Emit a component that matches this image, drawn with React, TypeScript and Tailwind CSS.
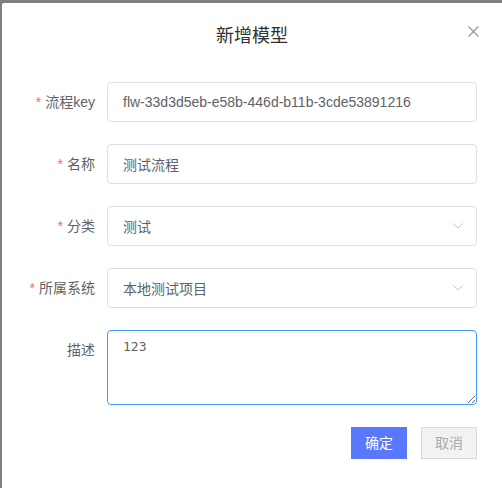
import { ReactNode } from "react";

function Label({ text, required }: { text: string; required?: boolean }) {
  return (
    <div className="w-[105px] shrink-0 pr-3 text-right text-[14px] leading-[40px] text-[#606266]">
      {required && <span className="mr-1 text-[#f56c6c]">*</span>}
      {text}
    </div>
  );
}

function Row({ children, last }: { children: ReactNode; last?: boolean }) {
  return <div className={last ? "flex" : "mb-[22px] flex"}>{children}</div>;
}

function Chevron() {
  return (
    <svg
      className="pointer-events-none absolute right-[13px] top-1/2 -translate-y-1/2"
      width="12"
      height="8"
      viewBox="0 0 12 8"
      fill="none"
    >
      <path d="M1 1.5 L6 6 L11 1.5" stroke="#c0c4cc" strokeWidth="1" />
    </svg>
  );
}

function TextField({ value, select }: { value: string; select?: boolean }) {
  return (
    <div className="relative w-[370px]">
      <input
        readOnly
        defaultValue={value}
        className="h-10 w-full rounded-[4px] border border-[#dcdfe6] bg-white px-[15px] text-[14px] text-[#606266] outline-none"
      />
      {select && <Chevron />}
    </div>
  );
}

export default function App() {
  return (
    <div
      className="h-[488px] w-[502px] overflow-hidden bg-[#808080] pl-[2px] pt-[3px]"
      style={{ fontFamily: '"Liberation Sans", "Noto Sans CJK SC", sans-serif' }}
    >
      <div className="h-full w-full rounded-tl-[2px] bg-white">
        <div className="relative flex h-[66px] items-center justify-center">
          <h2 className="text-[18px] text-[#303133]">新增模型</h2>
          <button className="absolute right-[23px] top-[23px] p-0">
            <svg width="11" height="11" viewBox="0 0 11 11" fill="none">
              <path d="M0.5 0.5 L10.5 10.5 M10.5 0.5 L0.5 10.5" stroke="#909399" strokeWidth="1.1" />
            </svg>
          </button>
        </div>

        <div className="pt-[13px]">
          <Row>
            <Label text="流程key" required />
            <TextField value="flw-33d3d5eb-e58b-446d-b11b-3cde53891216" />
          </Row>
          <Row>
            <Label text="名称" required />
            <TextField value="测试流程" />
          </Row>
          <Row>
            <Label text="分类" required />
            <TextField value="测试" select />
          </Row>
          <Row>
            <Label text="所属系统" required />
            <TextField value="本地测试项目" select />
          </Row>
          <Row last>
            <Label text="描述" />
            <textarea
              readOnly
              defaultValue="123"
              className="h-[75px] w-[370px] rounded-[4px] border border-[#409eff] bg-white px-[15px] py-[5px] text-[13px] leading-[21px] text-[#606266] outline-none"
              style={{ fontFamily: '"DejaVu Sans Mono", monospace' }}
            />
          </Row>

          <div className="mt-[22px] flex justify-end gap-[14px] pr-[25px]">
            <button className="h-8 w-14 bg-[#5a78ff] text-[14px] text-white">确定</button>
            <button className="h-8 w-14 border border-[#d9d9d9] bg-[#f2f2f2] text-[14px] text-[#aaaaaa]">
              取消
            </button>
          </div>
        </div>
      </div>
    </div>
  );
}
